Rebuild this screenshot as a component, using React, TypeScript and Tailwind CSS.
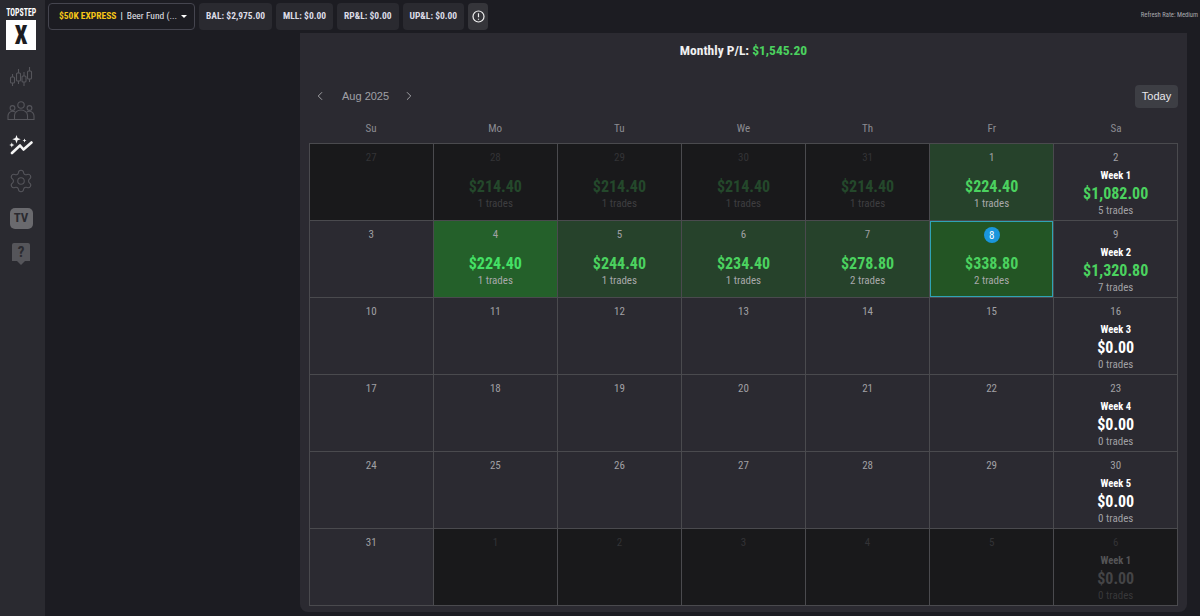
import { ChevronLeft, ChevronRight, Settings } from "lucide-react";

type Cell = {
  day: number;
  out?: boolean;
  amount?: string;
  trades?: number;
  tone?: "light" | "strong" | "today";
  week?: number;
  weekAmount?: string;
  weekTrades?: number;
};

const rows: Cell[][] = [
  [
    { day: 27, out: true },
    { day: 28, out: true, amount: "$214.40", trades: 1 },
    { day: 29, out: true, amount: "$214.40", trades: 1 },
    { day: 30, out: true, amount: "$214.40", trades: 1 },
    { day: 31, out: true, amount: "$214.40", trades: 1 },
    { day: 1, amount: "$224.40", trades: 1, tone: "light" },
    { day: 2, week: 1, weekAmount: "$1,082.00", weekTrades: 5 },
  ],
  [
    { day: 3 },
    { day: 4, amount: "$224.40", trades: 1, tone: "strong" },
    { day: 5, amount: "$244.40", trades: 1, tone: "light" },
    { day: 6, amount: "$234.40", trades: 1, tone: "light" },
    { day: 7, amount: "$278.80", trades: 2, tone: "light" },
    { day: 8, amount: "$338.80", trades: 2, tone: "today" },
    { day: 9, week: 2, weekAmount: "$1,320.80", weekTrades: 7 },
  ],
  [
    { day: 10 },
    { day: 11 },
    { day: 12 },
    { day: 13 },
    { day: 14 },
    { day: 15 },
    { day: 16, week: 3, weekAmount: "$0.00", weekTrades: 0 },
  ],
  [
    { day: 17 },
    { day: 18 },
    { day: 19 },
    { day: 20 },
    { day: 21 },
    { day: 22 },
    { day: 23, week: 4, weekAmount: "$0.00", weekTrades: 0 },
  ],
  [
    { day: 24 },
    { day: 25 },
    { day: 26 },
    { day: 27 },
    { day: 28 },
    { day: 29 },
    { day: 30, week: 5, weekAmount: "$0.00", weekTrades: 0 },
  ],
  [
    { day: 31 },
    { day: 1, out: true },
    { day: 2, out: true },
    { day: 3, out: true },
    { day: 4, out: true },
    { day: 5, out: true },
    { day: 6, out: true, week: 1, weekAmount: "$0.00", weekTrades: 0 },
  ],
];

const weekdays = ["Su", "Mo", "Tu", "We", "Th", "Fr", "Sa"];
const chips = ["BAL: $2,975.00", "MLL: $0.00", "RP&L: $0.00", "UP&L: $0.00"];

function CandlesIcon() {
  return (
    <svg width="24" height="24" viewBox="0 0 24 24" fill="none" stroke="#55555b" strokeWidth="1.1">
      <path d="M3.5 9v3M3.5 18v3M9.5 4v4M9.5 16v3M15 7v4M15 17v4M20.5 2v4M20.5 14v3" />
      <rect x="1.5" y="12" width="4" height="6" rx="1" />
      <rect x="7.5" y="8" width="4" height="8" rx="1" />
      <rect x="13" y="11" width="4" height="6" rx="1" />
      <rect x="18.5" y="6" width="4" height="8" rx="1" />
    </svg>
  );
}

function PeopleIcon() {
  return (
    <svg width="28" height="20" viewBox="0 0 28 20" fill="none" stroke="#55555b" strokeWidth="1.1">
      <circle cx="14" cy="4" r="3.2" />
      <circle cx="5.5" cy="7" r="2.4" />
      <circle cx="22.5" cy="7" r="2.4" />
      <path d="M7.5 18.5v-4c0-3 3-5.5 6.5-5.5s6.5 2.500 6.500 5.500v4z" />
      <path d="M7.500 18.500H1v-3.500c0-2.500 2-4.800 4.500-4.800 1 0 2 .3 2.800 1M20.500 18.500H27v-3.500c0-2.500-2-4.800-4.500-4.800-1 0-2 .3-2.800 1" />
    </svg>
  );
}

function SparkleChartIcon() {
  return (
    <svg width="24" height="20" viewBox="0 0 24 20" fill="none">
      <path d="M3 18l8-7.500 3.500 4L22.500 7.500" stroke="#f5f5f5" strokeWidth="2.600" strokeLinecap="round" strokeLinejoin="round" />
      <path d="M7.500 0l1.100 3.100 3.100 1.100-3.100 1.100-1.100 3.100-1.100-3.100-3.100-1.100 3.100-1.100zM2.800 7.500l.7 1.800 1.800.7-1.800.7-.7 1.800-.7-1.800L.3 10l1.800-.7zM15.500 3.500l.6 1.400 1.400.6-1.400.6-.6 1.400-.6-1.400-1.400-.6 1.400-.6z" fill="#f5f5f5" />
    </svg>
  );
}

function SidebarIcons() {
  return (
    <div className="flex flex-col items-center">
      <div className="flex h-[34px] items-center justify-center"><CandlesIcon /></div>
      <div className="flex h-[34px] items-center justify-center"><PeopleIcon /></div>
      <div className="flex h-[34px] items-center justify-center"><SparkleChartIcon /></div>
      <div className="flex h-[38px] items-center justify-center">
        <Settings size={26} strokeWidth={1} color="#55555b" />
      </div>
      <div className="flex h-[36px] items-center justify-center">
        <div className="flex h-[21px] w-[23px] items-center justify-center rounded-[5px] bg-[#6a6a6e] text-[13px] font-bold text-[#2a2a30]">
          TV
        </div>
      </div>
      <div className="flex h-[36px] flex-col items-center justify-center">
        <div className="flex h-[18px] w-[18px] items-center justify-center rounded-t-[2px] bg-[#55555a] text-[15px] font-bold text-[#2a2a30]">
          ?
        </div>
        <div className="h-0 w-0 border-x-[4px] border-t-[4px] border-x-transparent border-t-[#55555a]" />
      </div>
    </div>
  );
}

function CalendarCell({ cell }: { cell: Cell }) {
  let bg = "bg-[#2b2a31]";
  if (cell.out) bg = "bg-[#19191b]";
  if (cell.tone === "light") bg = "bg-[#26422b]";
  if (cell.tone === "strong") bg = "bg-[#24602a]";
  if (cell.tone === "today") bg = "bg-[#235524] outline outline-1 -outline-offset-1 outline-[#2fa3b5]";

  const dim = cell.out;

  return (
    <div className={`flex h-full flex-col items-center pt-[6px] ${bg}`}>
      {cell.tone === "today" ? (
        <div className="flex h-4 w-4 items-center justify-center rounded-full bg-[#1a96dc] text-[11px] leading-none text-white">
          {cell.day}
        </div>
      ) : (
        <div className={`h-4 text-[11px] leading-4 ${dim ? "text-[#333336]" : "text-[#a0a0a4]"}`}>{cell.day}</div>
      )}
      {cell.amount && (
        <>
          <div className={`mt-[11px] text-[16px] leading-[20px] font-bold ${dim ? "text-[#24482b]" : cell.tone === "strong" ? "text-[#44e065]" : "text-[#4bd25f]"}`}>
            {cell.amount}
          </div>
          <div className={`text-[11px] leading-[14px] ${dim ? "text-[#3e3e40]" : "text-[#a8a8aa]"}`}>
            {cell.trades} trades
          </div>
        </>
      )}
      {cell.week && (
        <>
          <div className={`mt-[3px] text-[10.5px] leading-[14px] font-bold ${dim ? "text-[#555557]" : "text-white"}`}>
            Week {cell.week}
          </div>
          <div className={`text-[16px] leading-[21px] font-bold ${dim ? "text-[#444446]" : cell.weekTrades ? "text-[#4bd25f]" : "text-white"}`}>
            {cell.weekAmount}
          </div>
          <div className={`text-[11px] leading-[14px] ${dim ? "text-[#38383a]" : "text-[#a0a0a4]"}`}>
            {cell.weekTrades} trades
          </div>
        </>
      )}
    </div>
  );
}

export default function App() {
  return (
    <div className="flex h-[616px] w-[1200px] overflow-hidden bg-[#1c1c22] font-['Roboto',sans-serif] [font-stretch:75%]">
      {/* sidebar */}
      <aside className="flex w-[45px] shrink-0 flex-col items-center bg-[#2a2a30] pt-[5px] pr-[3px]">
        <div className="flex w-[30px] justify-center whitespace-nowrap text-[10px] leading-[15px] font-bold text-white">
          <span className="inline-block scale-x-[0.78]">TOPSTEP</span>
        </div>
        <div className="flex h-[30px] w-[30px] items-center justify-center bg-white text-[25px] leading-[29px] font-black text-[#1c1c22]">
          <span className="inline-block scale-x-[0.9]">X</span>
        </div>
        <div className="mt-[10px]">
          <SidebarIcons />
        </div>
      </aside>

      <main className="flex min-w-0 flex-1 flex-col">
        {/* top bar */}
        <header className="flex h-[33px] shrink-0 items-start gap-1 pt-[3px] pl-[3px] text-[9.5px] font-bold whitespace-nowrap">
          <div className="flex h-[27px] w-[147px] items-center rounded border border-[#45454f] bg-[#1c1c22] pl-[10px]">
            <span className="text-[#f5c518]">$50K EXPRESS</span>
            <span className="mx-[4px] font-normal text-white">|</span>
            <span className="font-normal text-[#e4e4ea]">Beer Fund (...</span>
            <span className="ml-auto mr-[7px] h-0 w-0 border-x-[3.5px] border-t-[3.5px] border-x-transparent border-t-white" />
          </div>
          {chips.map((chip) => (
            <div key={chip} className="flex h-[27px] items-center rounded bg-[#2a2a30] px-[7px] text-[#dcdce6]">
              {chip}
            </div>
          ))}
          <div className="flex h-[27px] w-[20px] items-center justify-center rounded bg-[#35353a]">
            <svg width="13" height="13" viewBox="0 0 13 13" fill="none" stroke="#f0f0f0" strokeWidth="1.200">
              <circle cx="6.500" cy="6.500" r="5.500" />
              <path d="M6.500 3.200v4M6.500 8.800v1" />
            </svg>
          </div>
          <div className="ml-auto pt-[7px] pr-[2px] text-[6.6px] leading-[10px] font-normal text-[#a8a8ae]">
            Refresh Rate: Medium
          </div>
        </header>

        {/* calendar panel */}
        <div className="flex min-h-0 flex-1 pb-1 pl-[255px] pr-[13px]">
          <section className="flex flex-1 flex-col rounded-b-lg bg-[#2b2a31] px-[9px]">
            <div className="h-[34px] pt-[7px] text-center text-[13.5px] leading-5 font-bold text-[#f0f0f0]">
              Monthly P/L: <span className="text-[#4bd25f]">$1,545.20</span>
            </div>

            <div className="mt-[17px] flex h-[24px] items-center justify-between">
              <div className="flex items-center pl-[4px] font-['Liberation_Sans',sans-serif] text-[11px] text-[#a0a0a6]">
                <ChevronLeft size={14} strokeWidth={1.500} color="#b0b0b4" />
                <span className="ml-[15px] mr-[13px]">Aug 2025</span>
                <ChevronRight size={14} strokeWidth={1.500} color="#b0b0b4" />
              </div>
              <button className="flex h-[23px] w-[43px] items-center justify-center rounded bg-[#3d3e44] font-['Liberation_Sans',sans-serif] text-[11px] text-[#e8e8ec]">
                Today
              </button>
            </div>

            <div className="mt-[12px] grid h-[18px] grid-cols-7 items-center text-center text-[11px] text-[#8c8c92]">
              {weekdays.map((d) => (
                <div key={d}>{d}</div>
              ))}
            </div>

            <div className="mt-[5px] grid h-[463px] grid-cols-7 grid-rows-6 gap-[1.5px] bg-[#4a4a4e] p-[1px]">
              {rows.map((row, i) =>
                row.map((cell, j) => <CalendarCell key={`${i}-${j}`} cell={cell} />),
              )}
            </div>
          </section>
        </div>
      </main>
    </div>
  );
}
